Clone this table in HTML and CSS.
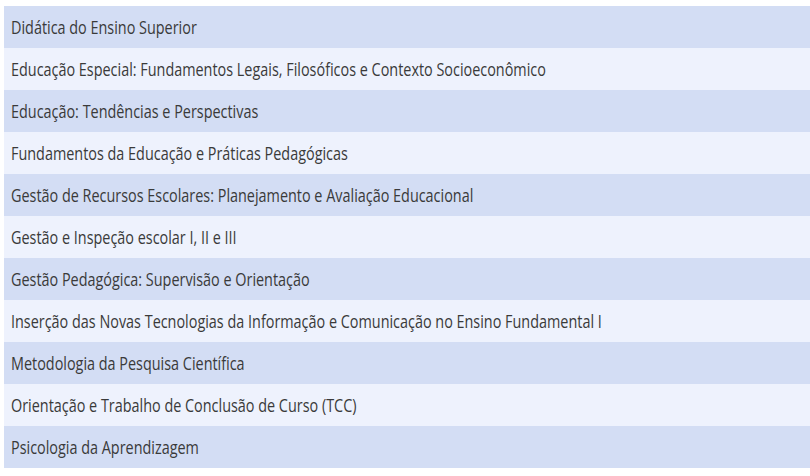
FILE: index.html
```html
<!DOCTYPE html>
<html lang="pt">
<head>
<meta charset="utf-8">
<link rel="stylesheet" href="styles.css">
</head>
<body>
<ul class="list">
  <li class="row odd"><span class="txt">Didática do Ensino Superior</span></li>
  <li class="row even"><span class="txt">Educação Especial: Fundamentos Legais, Filosóficos e Contexto Socioeconômico</span></li>
  <li class="row odd"><span class="txt">Educação: Tendências e Perspectivas</span></li>
  <li class="row even"><span class="txt">Fundamentos da Educação e Práticas Pedagógicas</span></li>
  <li class="row odd"><span class="txt">Gestão de Recursos Escolares: Planejamento e Avaliação Educacional</span></li>
  <li class="row even"><span class="txt">Gestão e Inspeção escolar I, II e III</span></li>
  <li class="row odd"><span class="txt">Gestão Pedagógica: Supervisão e Orientação</span></li>
  <li class="row even"><span class="txt">Inserção das Novas Tecnologias da Informação e Comunicação no Ensino Fundamental I</span></li>
  <li class="row odd"><span class="txt">Metodologia da Pesquisa Científica</span></li>
  <li class="row even"><span class="txt">Orientação e Trabalho de Conclusão de Curso (TCC)</span></li>
  <li class="row odd"><span class="txt">Psicologia da Aprendizagem</span></li>
</ul>
</body>
</html>
```
FILE: styles.css
```css
html, body {
  margin: 0;
  padding: 0;
  background: #ffffff;
}
body {
  padding: 6px 0 0 4px;
  font-family: "Open Sans", "DejaVu Sans", sans-serif;
}
.list {
  list-style: none;
  margin: 0;
  padding: 0;
}
.row {
  height: 42px;
  display: flex;
  align-items: center;
  padding-left: 7px;
  white-space: nowrap;
}
.odd { background: #d3ddf4; }
.even { background: #eef2fd; }
.txt {
  display: inline-block;
  font-size: 18px;
  color: #3a3a3a;
  transform: scaleX(0.8);
  transform-origin: left center;
}
```
